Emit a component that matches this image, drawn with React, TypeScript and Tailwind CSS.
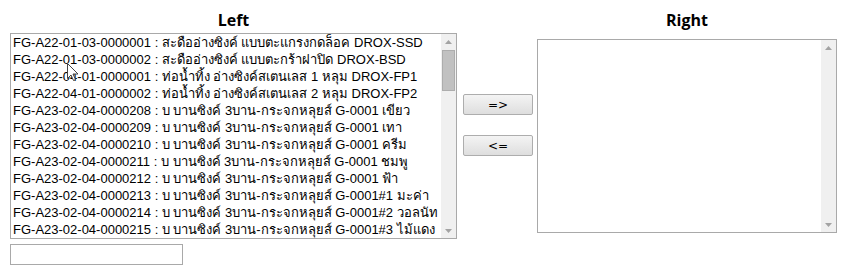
const ROWS = [
  'FG-A22-01-03-0000001 : สะดืออ่างซิงค์ แบบตะแกรงกดล็อค DROX-SSD',
  'FG-A22-01-03-0000002 : สะดืออ่างซิงค์ แบบตะกร้าฝาปิด DROX-BSD',
  'FG-A22-04-01-0000001 : ท่อน้ำทิ้ง อ่างซิงค์สเตนเลส 1 หลุม DROX-FP1',
  'FG-A22-04-01-0000002 : ท่อน้ำทิ้ง อ่างซิงค์สเตนเลส 2 หลุม DROX-FP2',
  'FG-A23-02-04-0000208 : บ บานซิงค์ 3บาน-กระจกหลุยส์ G-0001 เขียว',
  'FG-A23-02-04-0000209 : บ บานซิงค์ 3บาน-กระจกหลุยส์ G-0001 เทา',
  'FG-A23-02-04-0000210 : บ บานซิงค์ 3บาน-กระจกหลุยส์ G-0001 ครีม',
  'FG-A23-02-04-0000211 : บ บานซิงค์ 3บาน-กระจกหลุยส์ G-0001 ชมพู',
  'FG-A23-02-04-0000212 : บ บานซิงค์ 3บาน-กระจกหลุยส์ G-0001 ฟ้า',
  'FG-A23-02-04-0000213 : บ บานซิงค์ 3บาน-กระจกหลุยส์ G-0001#1 มะค่า',
  'FG-A23-02-04-0000214 : บ บานซิงค์ 3บาน-กระจกหลุยส์ G-0001#2 วอลนัท',
  'FG-A23-02-04-0000215 : บ บานซิงค์ 3บาน-กระจกหลุยส์ G-0001#3 ไม้แดง',
]

function Arrow({ dir }: { dir: 'up' | 'down' }) {
  return (
    <svg width="7" height="4" viewBox="0 0 7 4" className="block">
      <path d={dir === 'up' ? 'M0 4 L3.5 0 L7 4 Z' : 'M0 0 L7 0 L3.5 4 Z'} fill="#a3a3a3" />
    </svg>
  )
}

function Scrollbar({ thumb }: { thumb?: boolean }) {
  return (
    <div className="w-[15px] h-full bg-[#f0f0f0] flex flex-col items-center">
      <div className="h-[15px] flex items-center justify-center">
        <Arrow dir="up" />
      </div>
      <div className="flex-1 w-full px-[1px] pt-[1px]">
        {thumb && <div className="h-[41px] w-full bg-[#c1c1c1] border border-[#adadad]" />}
      </div>
      <div className="h-[15px] flex items-center justify-center">
        <Arrow dir="down" />
      </div>
    </div>
  )
}

function Btn({ label }: { label: string }) {
  return (
    <button
      type="button"
      className="w-[70px] h-[21px] border border-[#adadad] rounded-[2px] bg-gradient-to-b from-[#f4f4f4] to-[#dedede] text-[12px] leading-none text-black font-['DejaVu_Sans',sans-serif]"
    >
      {label}
    </button>
  )
}

export default function App() {
  return (
    <div className="relative w-[854px] h-[278px] bg-white flex font-['Liberation_Sans',Arial,sans-serif] text-black">
      <div className="ml-[10px] flex flex-col">
        <div className="h-[33px] pt-[10px] text-center text-[16px] leading-[20px] font-bold font-['Open_Sans',sans-serif]">
          Left
        </div>
        <div className="w-[447px] h-[206px] border border-[#a9a9a9] flex">
          <div className="flex-1 overflow-hidden">
            {ROWS.map((r) => (
              <div key={r} className="h-[17px] leading-[17px] text-[13px] pl-[2px] whitespace-nowrap">
                {r}
              </div>
            ))}
          </div>
          <Scrollbar thumb />
        </div>
        <input
          type="text"
          className="mt-[5px] w-[173px] h-[21px] border border-[#a9a9a9] outline-none"
        />
      </div>

      <div className="ml-[6px] pt-[94px] flex flex-col gap-[20px]">
        <Btn label="=>" />
        <Btn label="<=" />
      </div>

      <div className="ml-[4px] flex flex-col">
        <div className="h-[33px] pt-[10px] text-center text-[16px] leading-[20px] font-bold font-['Open_Sans',sans-serif]">
          Right
        </div>
        <div className="mt-[6px] w-[300px] h-[194px] border border-[#a9a9a9] flex">
          <div className="flex-1" />
          <Scrollbar />
        </div>
      </div>

      <svg className="absolute left-[67px] top-[63px]" width="12" height="19" viewBox="0 0 12 19">
        <path d="M0.5 0.5 L0.5 15.5 L4 12 L6.5 17.5 L8.5 16.5 L6 11 L11 11 Z" fill="#fff" stroke="#444" strokeWidth="1" strokeLinejoin="round" />
      </svg>
    </div>
  )
}
